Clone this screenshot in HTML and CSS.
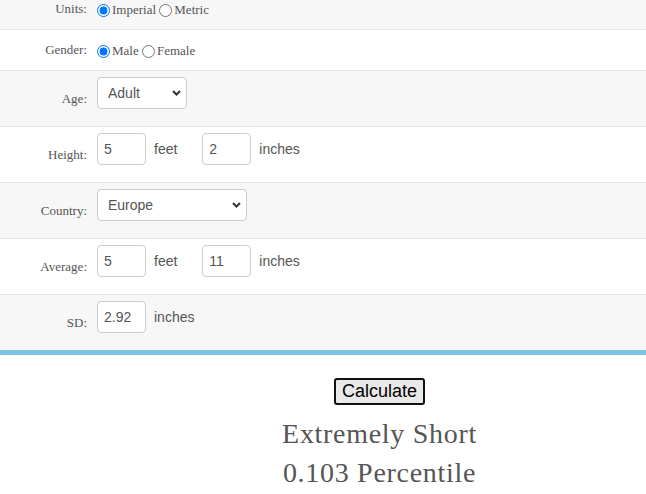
FILE: index.html
```html
<!DOCTYPE html>
<html lang="en">
<head>
<meta charset="utf-8">
<title>Height Percentile Calculator</title>
<link rel="stylesheet" href="styles.css">
</head>
<body>
<div class="form">
  <div class="row row-radio shade">
    <span class="label">Units:</span>
    <div class="field"><label><input type="radio" name="units" checked>Imperial</label> <label><input type="radio" name="units">Metric</label></div>
  </div>
  <div class="row row-radio">
    <span class="label">Gender:</span>
    <div class="field"><label><input type="radio" name="gender" checked>Male</label> <label><input type="radio" name="gender">Female</label></div>
  </div>
  <div class="row row-input shade">
    <span class="label">Age:</span>
    <div class="field">
      <div class="select-wrap age">
        <select><option>Adult</option><option>Child</option></select>
        <svg class="chevron" width="9" height="6" viewBox="0 0 9 6"><path d="M1 1L4.5 4.5L8 1" fill="none" stroke="#333" stroke-width="2"/></svg>
      </div>
    </div>
  </div>
  <div class="row row-input">
    <span class="label">Height:</span>
    <div class="field">
      <div class="pair"><input class="num" type="text" value="5"><span>feet</span></div>
      <div class="pair"><input class="num" type="text" value="2"><span>inches</span></div>
    </div>
  </div>
  <div class="row row-input shade">
    <span class="label">Country:</span>
    <div class="field">
      <div class="select-wrap country">
        <select><option>Europe</option><option>United States</option><option>Asia</option></select>
        <svg class="chevron" width="9" height="6" viewBox="0 0 9 6"><path d="M1 1L4.5 4.5L8 1" fill="none" stroke="#333" stroke-width="2"/></svg>
      </div>
    </div>
  </div>
  <div class="row row-input">
    <span class="label">Average:</span>
    <div class="field">
      <div class="pair"><input class="num" type="text" value="5"><span>feet</span></div>
      <div class="pair"><input class="num" type="text" value="11"><span>inches</span></div>
    </div>
  </div>
  <div class="row row-input shade last">
    <span class="label">SD:</span>
    <div class="field">
      <div class="pair"><input class="num" type="text" value="2.92"><span>inches</span></div>
    </div>
  </div>
</div>
<div class="bar"></div>
<div class="result">
  <button type="button" class="calc">Calculate</button>
  <p class="verdict">Extremely Short</p>
  <p class="verdict">0.103 Percentile</p>
</div>
</body>
</html>
```
FILE: styles.css
```css
html, body {
  margin: 0;
  padding: 0;
  background: #fff;
}

body {
  font-family: "Liberation Serif", "Times New Roman", serif;
  color: #555;
}

/* the form is scrolled a little, so the first row is partly hidden */
.form {
  margin-top: -11px;
}

.row {
  display: grid;
  grid-template-columns: 87px auto;
  column-gap: 10px;
  align-items: center;
  background: #fff;
  border-bottom: 1px solid #e6e6e6;
}

.row.shade {
  background: #f7f7f7;
}

.row.last {
  border-bottom: none;
}

.label {
  text-align: right;
  font-size: 13px;
  line-height: 18px;
}

.row-radio .field {
  padding: 12px 0 10px;
  font-size: 13px;
  line-height: 18px;
}

.row-radio label {
  white-space: nowrap;
}

.row-radio input[type="radio"] {
  width: 13px;
  height: 13px;
  margin: 0 2px 0 0;
  vertical-align: middle;
  position: relative;
  top: -1px;
}

.row-input .field {
  display: flex;
  align-items: center;
  gap: 25px;
  padding: 6px 0 17px;
  font-family: "Liberation Sans", Arial, sans-serif;
  font-size: 14px;
}

.pair {
  display: flex;
  align-items: center;
  gap: 8px;
}

.num,
.select-wrap select {
  box-sizing: border-box;
  height: 32px;
  border: 1px solid #ccc;
  border-radius: 4px;
  background: #fff;
  color: #555;
  font-family: "Liberation Sans", Arial, sans-serif;
  font-size: 14px;
  line-height: 20px;
}

.num {
  width: 49px;
  padding: 5px 6px;
}

.select-wrap {
  position: relative;
}

.select-wrap.age {
  width: 90px;
}

.select-wrap.country {
  width: 150px;
}

.select-wrap select {
  width: 100%;
  padding: 0 22px 0 10px;
  -webkit-appearance: none;
  appearance: none;
  display: block;
}

.chevron {
  position: absolute;
  right: 6px;
  top: 13px;
  pointer-events: none;
}

.bar {
  height: 5px;
  background: #7ec4e4;
}

.result {
  padding: 23px 0 0 113px;
  text-align: center;
}

.calc {
  font-family: "Liberation Sans", Arial, sans-serif;
  font-size: 18px;
  line-height: 21px;
  padding: 1px 6px;
  color: #000;
  background: #e9e9e9;
  border: 2px solid #111;
  border-radius: 3px;
  margin: 0;
}

.verdict {
  margin: 0;
  font-size: 28px;
  line-height: 39px;
  letter-spacing: 0.7px;
  color: #555;
}

.calc + .verdict {
  margin-top: 9px;
}
```
